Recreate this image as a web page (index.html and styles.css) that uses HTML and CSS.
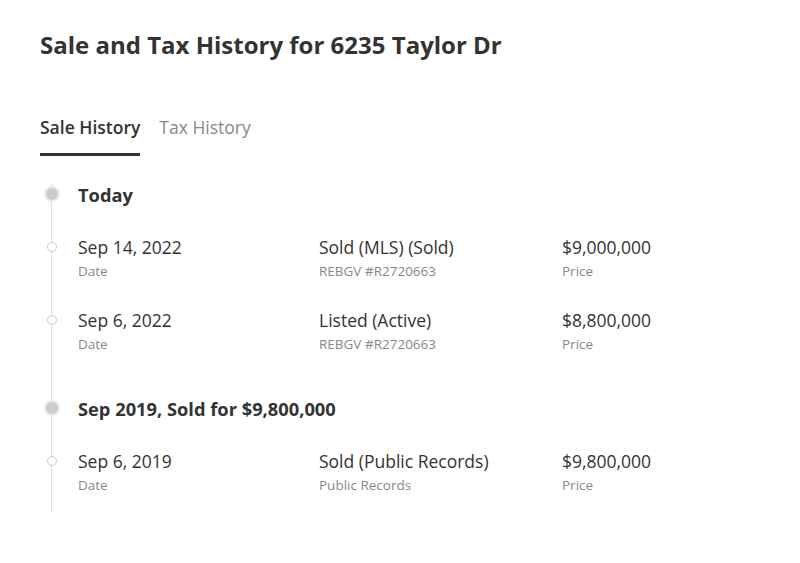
FILE: index.html
```
<!DOCTYPE html>
<html>
<head>
<meta charset="utf-8">
<link rel="stylesheet" href="styles.css">
</head>
<body>
<div class="page">
  <h1 class="title">Sale and Tax History for 6235 Taylor Dr</h1>
  <div class="tabs">
    <div class="tab active">Sale History</div>
    <div class="tab">Tax History</div>
  </div>
  <div class="timeline">
    <div class="group">
      <div class="group-head"><span class="dot big"></span>Today</div>
      <div class="row">
        <span class="dot small"></span>
        <div class="cell c1"><div class="main">Sep 14, 2022</div><div class="sub">Date</div></div>
        <div class="cell c2"><div class="main">Sold (MLS) (Sold)</div><div class="sub">REBGV #R2720663</div></div>
        <div class="cell c3"><div class="main">$9,000,000</div><div class="sub">Price</div></div>
      </div>
      <div class="row">
        <span class="dot small"></span>
        <div class="cell c1"><div class="main">Sep 6, 2022</div><div class="sub">Date</div></div>
        <div class="cell c2"><div class="main">Listed (Active)</div><div class="sub">REBGV #R2720663</div></div>
        <div class="cell c3"><div class="main">$8,800,000</div><div class="sub">Price</div></div>
      </div>
    </div>
    <div class="group">
      <div class="group-head"><span class="dot big"></span>Sep 2019, Sold for $9,800,000</div>
      <div class="row">
        <span class="dot small"></span>
        <div class="cell c1"><div class="main">Sep 6, 2019</div><div class="sub">Date</div></div>
        <div class="cell c2"><div class="main">Sold (Public Records)</div><div class="sub">Public Records</div></div>
        <div class="cell c3"><div class="main">$9,800,000</div><div class="sub">Price</div></div>
      </div>
    </div>
  </div>
</div>
</body>
</html>
```
FILE: styles.css
```
* { box-sizing: border-box; }
html, body { margin: 0; padding: 0; background: #fff; }
body { font-family: "Open Sans", "Liberation Sans", sans-serif; color: #333; }
.page { padding: 29px 40px 0 40px; }
.title { margin: 0; font-size: 24px; font-weight: 700; line-height: 32px; color: #333; }
.tabs { display: flex; gap: 19px; margin-top: 55px; }
.tab { font-size: 17.5px; line-height: 22px; padding-bottom: 15px; color: #888; }
.tab.active { color: #333; font-weight: 600; border-bottom: 3px solid #333; }
.timeline { position: relative; margin-top: 27px; margin-left: 11px; border-left: 1px solid #ddd; padding-bottom: 17px; }
.group { position: relative; }
.group + .group { margin-top: 44px; }
.group-head { position: relative; font-size: 18.3px; font-weight: 700; line-height: 24px; padding-left: 26px; color: #333; }
.dot { position: absolute; border-radius: 50%; background: #fff; }
.dot.big { width: 16px; height: 16px; left: -8.5px; top: 3px; background: #ccc; border: 2px solid #ebebeb; }
.row { position: relative; display: flex; padding-left: 26px; margin-top: 28px; }
.dot.small { width: 10px; height: 10px; left: -5.5px; top: 7px; border: 1px solid #ccc; }
.cell { display: flex; flex-direction: column; }
.c1 { width: 241px; }
.c2 { width: 243px; }
.main { font-size: 17.5px; line-height: 24px; color: #333; }
.sub { font-size: 13.5px; line-height: 18px; color: #888; margin-top: 3px; }
```
